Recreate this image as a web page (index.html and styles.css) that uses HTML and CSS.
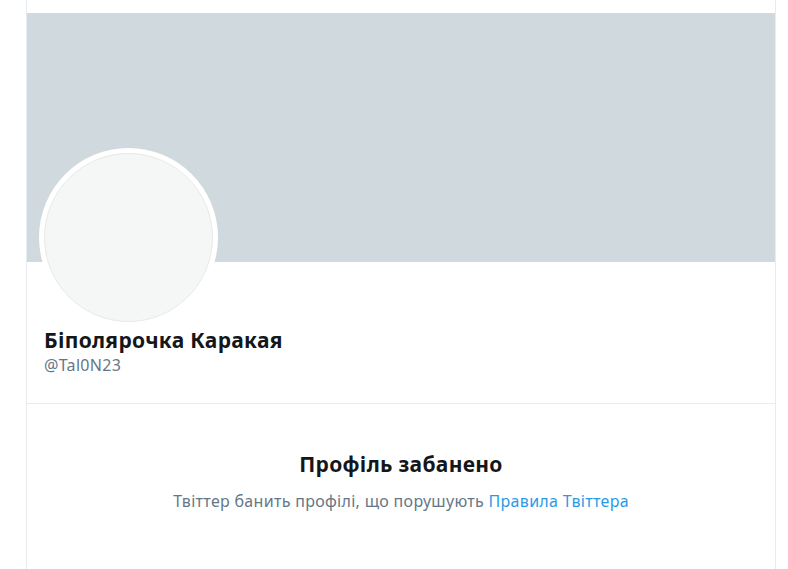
FILE: index.html
```html
<!DOCTYPE html>
<html lang="uk">
<head>
<meta charset="utf-8">
<title>Біполярочка Каракая (@Tal0N23)</title>
<link rel="stylesheet" href="styles.css">
</head>
<body>
<main class="column">
  <div class="top-gap"></div>
  <div class="banner"></div>
  <section class="profile">
    <div class="avatar"><div class="avatar-inner"></div></div>
    <h1 class="name">Біполярочка Каракая</h1>
    <div class="handle">@Tal0N23</div>
  </section>
  <section class="notice">
    <h2 class="notice-title">Профіль забанено</h2>
    <p class="notice-text">Твіттер банить профілі, що порушують <a class="link" href="#">Правила Твіттера</a></p>
  </section>
</main>
</body>
</html>
```

FILE: styles.css
```css
html, body {
  margin: 0;
  padding: 0;
  background: #ffffff;
  height: 100%;
}
body {
  font-family: "Noto Sans", "Open Sans", sans-serif;
  color: #14171a;
  overflow: hidden;
}
.column {
  margin-left: 26px;
  width: 748px;
  min-height: 100%;
  border-left: 1px solid #e6ecf0;
  border-right: 1px solid #e6ecf0;
  display: flex;
  flex-direction: column;
}
.top-gap {
  height: 13px;
}
.banner {
  height: 249px;
  background: #d0d9de;
}
.profile {
  padding: 0 16px 0 17px;
  display: flex;
  flex-direction: column;
  border-bottom: 1px solid #e6ecf0;
  height: 142px;
  box-sizing: border-box;
}
.avatar {
  margin-top: -114px;
  margin-left: -5px;
  width: 179px;
  height: 179px;
  border-radius: 50%;
  background: #ffffff;
  padding: 5px;
  box-sizing: border-box;
}
.avatar-inner {
  width: 100%;
  height: 100%;
  border-radius: 50%;
  background: #f5f7f7;
  border: 1px solid #e7eaea;
  box-sizing: border-box;
}
.name {
  margin: 0;
  font-size: 21px;
  letter-spacing: 0.3px;
  font-weight: 700;
  line-height: 26px;
  color: #14171a;
}
.handle {
  margin-top: 2px;
  font-size: 16px;
  letter-spacing: 0.3px;
  line-height: 20px;
  color: #657786;
}
.notice {
  display: flex;
  flex-direction: column;
  align-items: center;
  padding-top: 47px;
}
.notice-title {
  margin: 0;
  font-size: 21px;
  letter-spacing: 0.3px;
  font-weight: 700;
  line-height: 26px;
  color: #14171a;
}
.notice-text {
  margin: 14px 0 0;
  font-size: 16px;
  letter-spacing: 0.3px;
  line-height: 20px;
  color: #657786;
}
.link {
  color: #2a9ae6;
  text-decoration: none;
}
```
